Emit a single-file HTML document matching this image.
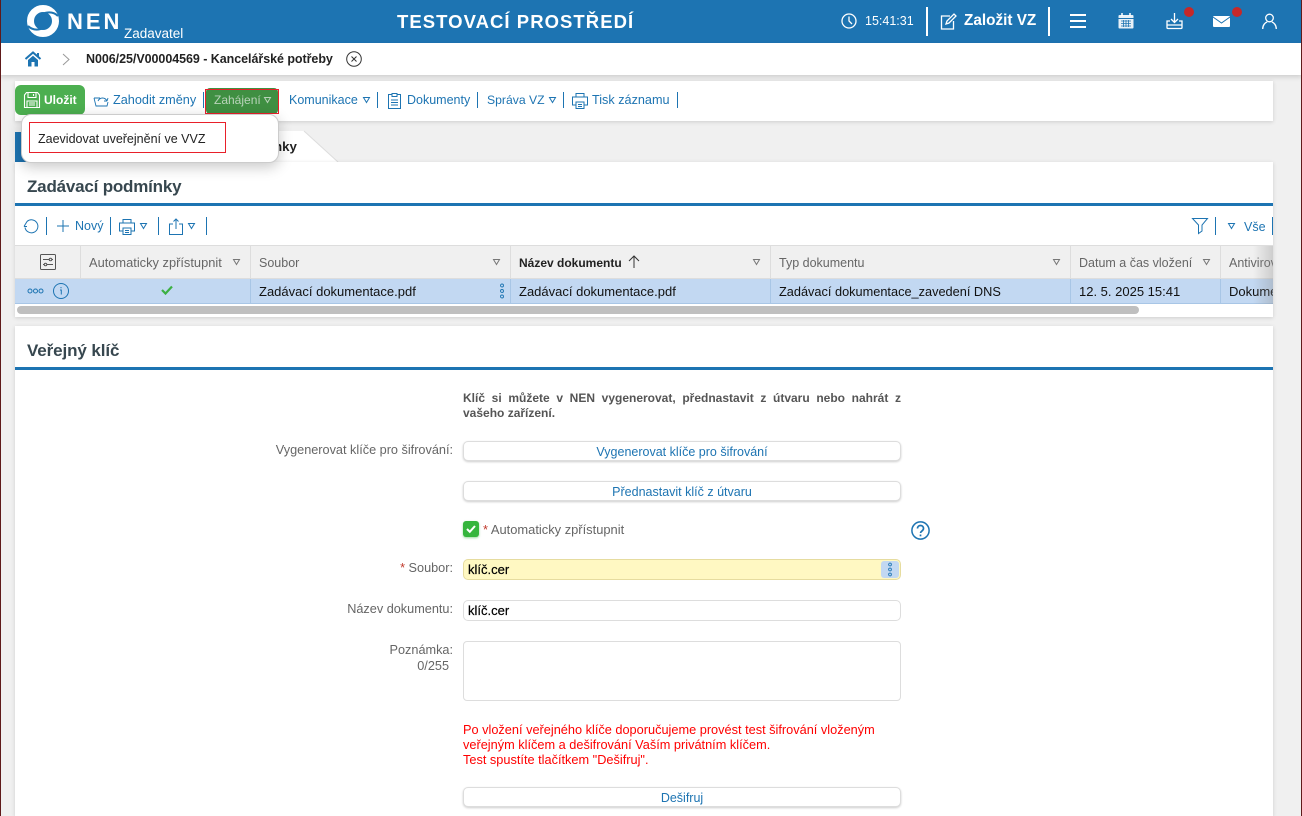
<!DOCTYPE html>
<html lang="cs"><head><meta charset="utf-8"><title>NEN</title>
<style>
*{box-sizing:border-box}
html,body{margin:0;padding:0;width:1302px;height:816px;overflow:hidden;background:#f0f0f0;font-family:"Liberation Sans",sans-serif}
.a{position:absolute}
.t{position:absolute;white-space:nowrap;font-size:12.5px;line-height:16px;color:#666}
.b{color:#1d74b2}
.s{position:absolute;width:1px;background:#1d74b2}
svg{position:absolute;overflow:visible;fill:none}
.btn{position:absolute;left:463px;width:438px;height:20px;background:#fff;border:1px solid #ddd;border-radius:5px;box-shadow:0 1px 2px rgba(0,0,0,.2);text-align:center;font-size:12.5px;line-height:21px;color:#1d74b2}
.inp{position:absolute;left:463px;width:438px;height:21px;background:#fff;border:1px solid #ddd;border-radius:5px;font-size:13px;line-height:19px;color:#000;padding-left:4px;-webkit-text-stroke:.2px #000}
.th{position:absolute;top:246px;height:33px;background:#f0f0f0;border-right:1px solid #ddd}
.td{position:absolute;top:279px;height:25px;border-right:1px solid #a8c6e6}
.r{text-align:right;font-size:12.7px}
</style></head><body>

<div class="a" style="left:0;top:0;width:1302px;height:43px;background:#1d74b2"></div>
<div class="a" style="left:0;top:43px;width:1302px;height:32px;background:#fff;box-shadow:0 2px 5px rgba(0,0,0,.15)"></div>

<!-- logo -->
<svg style="left:27px;top:5px" width="32" height="32" viewBox="0 0 32 32"><circle cx="16" cy="16" r="12.500" stroke="#fff" stroke-width="7"/><path d="M1 21C6 26 12 25 17 23M31 11C26 6 20 7 15 9" stroke="#1d74b2" stroke-width="2"/></svg>
<div class="t" style="left:67px;top:9px;font-size:22px;line-height:26px;font-weight:bold;color:#fff;letter-spacing:3px">NEN</div>
<div class="t" style="left:124px;top:26px;font-size:13.500px;color:#fff">Zadavatel</div>
<div class="t" style="left:397px;top:10px;font-size:18.500px;line-height:24px;font-weight:bold;color:#fff;letter-spacing:1.050px">TESTOVACÍ PROSTŘEDÍ</div>

<!-- clock -->
<svg style="left:841px;top:13px" width="16" height="16" viewBox="0 0 16 16" stroke="#fff" stroke-width="1.300"><circle cx="8" cy="8" r="7"/><path d="M8 3.500V8l3 3"/></svg>
<div class="t" style="left:865px;top:13px;color:#fff;font-size:12.500px">15:41:31</div>
<div class="a" style="left:926px;top:7px;width:2px;height:29px;background:#fff"></div>
<svg style="left:940px;top:13px" width="18" height="17" viewBox="0 0 18 17" stroke="#fff" stroke-width="1.300"><path d="M10 3H1.500v13h12V8"/><path d="M6 11l1-3 7-7 2 2-7 7z"/></svg>
<div class="t" style="left:964px;top:12px;color:#fff;font-size:15.300px;font-weight:bold;line-height:18px">Založit VZ</div>
<div class="a" style="left:1048px;top:7px;width:2px;height:29px;background:#fff"></div>
<div class="a" style="left:1070px;top:14px;width:16px;height:14px;border-top:2px solid #fff;border-bottom:2px solid #fff"></div>
<div class="a" style="left:1070px;top:20px;width:16px;height:2px;background:#fff"></div>
<!-- calendar -->
<svg style="left:1118px;top:13px" width="16" height="16" viewBox="0 0 16 16"><rect x=".5" y="2" width="15" height="13.500" rx="1" fill="#fff" opacity=".9"/><path d="M.5 5.500h15" stroke="#1d74b2"/><path d="M4 0v3M12 0v3" stroke="#fff" stroke-width="1.500"/><path d="M3 8h10M3 10.500h10M3 13h10M5.500 7v7M8 7v7M10.500 7v7" stroke="#1d74b2" stroke-width=".8"/></svg>
<!-- download -->
<svg style="left:1166px;top:13px" width="17" height="17" viewBox="0 0 17 17" stroke="#fff" stroke-width="1.300"><path d="M8.500 0v9M5 6l3.500 3.500L12 6"/><path d="M4 8H1v6.500a1 1 0 0 0 1 1h13a1 1 0 0 0 1-1V8h-3M1 12h15"/></svg>
<div class="a" style="left:1184px;top:7px;width:10px;height:10px;border-radius:50%;background:#c62828"></div>
<!-- mail -->
<svg style="left:1213px;top:16px" width="17" height="11" viewBox="0 0 17 11"><rect width="17" height="11" rx="1" fill="#fff"/><path d="M0 1l8.500 6L17 1" stroke="#1d74b2"/></svg>
<div class="a" style="left:1232px;top:7px;width:10px;height:10px;border-radius:50%;background:#c62828"></div>
<!-- user -->
<svg style="left:1262px;top:13px" width="15" height="16" viewBox="0 0 15 16" stroke="#fff" stroke-width="1.300"><circle cx="7.500" cy="5" r="3.800"/><path d="M.7 16c0-4 2.500-6.500 4.500-7M14.300 16c0-4-2.500-6.500-4.500-7"/></svg>

<!-- breadcrumb -->
<svg style="left:25px;top:51px" width="16" height="16" viewBox="0 0 16 16"><path d="M.5 8L8 1.500 15.500 8" stroke="#1d74b2" stroke-width="2"/><path d="M3 9L8 4.800 13 9v6.500H9.500V11h-3v4.500H3z" fill="#1d74b2"/><path d="M12 2h2v3.500h-2z" fill="#1d74b2"/></svg>
<svg style="left:62px;top:53px" width="8" height="13" viewBox="0 0 8 13" stroke="#999"><path d="M1 1l6 5.500L1 12"/></svg>
<div class="t" style="left:86px;top:51px;font-size:12.500px;font-weight:bold;color:#222;letter-spacing:-.05px">N006/25/V00004569 - Kancelářské potřeby</div>
<svg style="left:346px;top:51px" width="16" height="16" viewBox="0 0 16 16" stroke="#333"><circle cx="8" cy="8" r="7.300"/><path d="M5.500 5.500l5 5M10.500 5.500l-5 5"/></svg>

<!-- toolbar -->
<div class="a" style="left:15px;top:81px;width:1258px;height:40px;background:#fff;box-shadow:0 1px 4px rgba(0,0,0,.15)"></div>
<div class="a" style="left:15px;top:85px;width:70px;height:30px;background:#4caf50;border-radius:6px"></div>
<svg style="left:24px;top:92px" width="16" height="16" viewBox="0 0 16 16" stroke="#fff" stroke-width="1.100"><path d="M.5 3l2-2.500h11l2 2.500v12.500H.5z"/><path d="M4 .5v5h8v-5M9.500 2v2M3 15.500V9h10v6.500M5 11h6M5 13h6"/></svg>
<div class="t" style="left:44px;top:92px;color:#fff;font-weight:bold;font-size:12px">Uložit</div>
<svg style="left:93px;top:95px" width="16" height="12" viewBox="0 0 16 12" stroke="#1d74b2"><path d="M1 3h6M1 3l2 8h11l1-4M5 6c2-4 7-4 9 0M14 6l1-3M14 6l-3 0" stroke-width=".9"/></svg>
<div class="t b" style="left:113px;top:92px;font-size:12.700px">Zahodit změny</div>
<div class="s" style="left:203px;top:92px;height:16px"></div>
<div class="a" style="left:206px;top:88px;width:72px;height:26px;background:#3f8f42;border-radius:4px"></div>
<div class="a" style="left:205px;top:89px;width:74px;height:25px;border:1px solid #e8202a"></div>
<div class="t" style="left:214px;top:92px;color:#b9d3ba;font-size:12px">Zahájení</div>
<svg style="left:264px;top:97px" width="7" height="6" viewBox="0 0 7 6" stroke="#b9d3ba"><path d="M.5.500h6L3.500 5.500z"/></svg>
<div class="t b" style="left:289px;top:92px">Komunikace</div>
<svg style="left:363px;top:97px" width="7" height="6" viewBox="0 0 7 6" stroke="#1d74b2"><path d="M.5.500h6L3.500 5.500z"/></svg>
<div class="s" style="left:377px;top:92px;height:16px"></div>
<svg style="left:388px;top:92px" width="13" height="17" viewBox="0 0 13 17" stroke="#1d74b2"><path d="M4 2.500H.5v14h12v-14H9M4 1.500h5v3H4zM3 8h7M3 10.500h7M3 13h7"/></svg>
<div class="t b" style="left:407px;top:92px">Dokumenty</div>
<div class="s" style="left:477px;top:92px;height:16px"></div>
<div class="t b" style="left:487px;top:92px;font-size:12.200px">Správa VZ</div>
<svg style="left:549px;top:97px" width="7" height="6" viewBox="0 0 7 6" stroke="#1d74b2"><path d="M.5.500h6L3.500 5.500z"/></svg>
<div class="s" style="left:563px;top:92px;height:16px"></div>
<svg style="left:572px;top:93px" width="16" height="16" viewBox="0 0 16 16" stroke="#1d74b2"><path d="M4 4V.5h8V4M4 12H.5V4h15v8H12M4 9h8v6.500H4zM6 11.500h4M6 13.500h4"/></svg>
<div class="t b" style="left:592px;top:92px;font-size:12.650px">Tisk záznamu</div>
<div class="s" style="left:677px;top:92px;height:16px"></div>

<!-- tab -->
<div class="a" style="left:15px;top:132px;width:40px;height:30px;background:#1d74b2"></div>
<svg style="left:200px;top:131px" width="140" height="31" viewBox="0 0 140 31"><path d="M0 0H104L138 31H0z" fill="#fff"/><path d="M104 0L138 31" stroke="#ddd"/></svg>
<div class="t" style="left:274px;top:139px;font-size:13.300px;font-weight:bold;color:#222">nky</div>

<!-- panel 1 -->
<div class="a" style="left:15px;top:162px;width:1258px;height:155px;background:#fff;box-shadow:0 1px 4px rgba(0,0,0,.15)"></div>
<div class="a" style="left:15px;top:203px;width:1258px;height:3px;background:#1d74b2"></div>
<div class="t" style="left:27px;top:176px;font-size:17px;line-height:22px;font-weight:bold;color:#37474f;letter-spacing:-.2px">Zadávací podmínky</div>

<svg style="left:23px;top:219px" width="16" height="15" viewBox="0 0 16 15" stroke="#1d74b2"><path d="M4 2.500a6.500 6.500 0 1 1-2 6M4 2.500L1 7.500M1 7.500h3"/></svg>
<div class="s" style="left:46px;top:217px;height:18px"></div>
<svg style="left:57px;top:220px" width="12" height="12" viewBox="0 0 12 12" stroke="#1d74b2"><path d="M6 0v12M0 6h12"/></svg>
<div class="t b" style="left:75px;top:218px">Nový</div>
<div class="s" style="left:110px;top:217px;height:18px"></div>
<svg style="left:119px;top:219px" width="16" height="16" viewBox="0 0 16 16" stroke="#1d74b2"><path d="M4 4V.5h8V4M4 12H.5V4h15v8H12M4 9h8v6.500H4zM6 11.500h4M6 13.500h4"/></svg>
<svg style="left:140px;top:223px" width="7" height="6" viewBox="0 0 7 6" stroke="#1d74b2"><path d="M.5.500h6L3.500 5.500z"/></svg>
<div class="s" style="left:158px;top:217px;height:18px"></div>
<svg style="left:169px;top:218px" width="14" height="17" viewBox="0 0 14 17" stroke="#1d74b2"><path d="M4 6H.5v10.500h13V6H10M7 11V1M4.500 3.500L7 1l2.500 2.500"/></svg>
<svg style="left:188px;top:223px" width="7" height="6" viewBox="0 0 7 6" stroke="#1d74b2"><path d="M.5.500h6L3.500 5.500z"/></svg>
<div class="s" style="left:206px;top:217px;height:18px"></div>

<svg style="left:1192px;top:218px" width="16" height="16" viewBox="0 0 16 16" stroke="#1d74b2"><path d="M.5.500h15L10 7v6l-3.500 2.500V7z"/></svg>
<div class="s" style="left:1215px;top:217px;height:18px"></div>
<svg style="left:1228px;top:223px" width="7" height="6" viewBox="0 0 7 6" stroke="#1d74b2"><path d="M.5.500h6L3.500 5.500z"/></svg>
<div class="t b" style="left:1244px;top:219px">Vše</div>
<div class="s" style="left:1272px;top:217px;height:18px"></div>

<!-- table header -->
<div class="a" style="left:15px;top:245px;width:1258px;height:1px;background:#ddd"></div>
<div class="th" style="left:15px;width:66px"></div>
<div class="th" style="left:81px;width:170px"></div>
<div class="th" style="left:251px;width:260px"></div>
<div class="th" style="left:511px;width:260px"></div>
<div class="th" style="left:771px;width:300px"></div>
<div class="th" style="left:1071px;width:150px"></div>
<div class="th" style="left:1221px;width:52px;border-right:0"></div>
<div class="a" style="left:15px;top:278px;width:1258px;height:1px;background:#ddd"></div>
<svg style="left:40px;top:254px" width="16" height="16" viewBox="0 0 16 16" stroke="#555"><rect x=".5" y=".5" width="15" height="15" rx="1"/><path d="M3 5.500h6M12 5.500h1M3 10.500h1M7 10.500h6"/><circle cx="10.500" cy="5.500" r="1.300"/><circle cx="5.500" cy="10.500" r="1.300"/></svg>
<div class="t" style="left:89px;top:255px;font-size:12.850px">Automaticky zpřístupnit</div>
<div class="t" style="left:259px;top:255px">Soubor</div>
<div class="t" style="left:519px;top:255px;font-weight:bold;color:#222;font-size:12px">Název dokumentu</div>
<svg style="left:628px;top:255px" width="12" height="13" viewBox="0 0 12 13" stroke="#333"><path d="M6 13V1M1 6l5-5 5 5"/></svg>
<div class="t" style="left:779px;top:255px">Typ dokumentu</div>
<div class="t" style="left:1079px;top:255px">Datum a čas vložení</div>
<div class="a" style="left:1229px;top:255px;width:44px;overflow:hidden;height:16px;font-size:12.500px;line-height:16px;color:#666;white-space:nowrap">Antivirová</div>
<svg style="left:233px;top:259px" width="7" height="6" viewBox="0 0 7 6" stroke="#777"><path d="M.5.500h6L3.500 5.500z"/></svg>
<svg style="left:493px;top:259px" width="7" height="6" viewBox="0 0 7 6" stroke="#777"><path d="M.5.500h6L3.500 5.500z"/></svg>
<svg style="left:753px;top:259px" width="7" height="6" viewBox="0 0 7 6" stroke="#777"><path d="M.5.500h6L3.500 5.500z"/></svg>
<svg style="left:1053px;top:259px" width="7" height="6" viewBox="0 0 7 6" stroke="#777"><path d="M.5.500h6L3.500 5.500z"/></svg>
<svg style="left:1203px;top:259px" width="7" height="6" viewBox="0 0 7 6" stroke="#777"><path d="M.5.500h6L3.500 5.500z"/></svg>

<!-- row -->
<div class="a" style="left:15px;top:279px;width:1258px;height:25px;background:#c2d8f2;border-bottom:1px solid #a8c6e6"></div>
<div class="td" style="left:81px;width:170px"></div>
<div class="td" style="left:251px;width:260px"></div>
<div class="td" style="left:511px;width:260px"></div>
<div class="td" style="left:771px;width:300px"></div>
<div class="td" style="left:1071px;width:150px"></div>
<svg style="left:27px;top:288px" width="17" height="6" viewBox="0 0 17 6" stroke="#1d74b2"><circle cx="3" cy="3" r="2"/><circle cx="8.500" cy="3" r="2"/><circle cx="14" cy="3" r="2"/></svg>
<svg style="left:53px;top:283px" width="16" height="16" viewBox="0 0 16 16" stroke="#1d74b2"><circle cx="8" cy="8" r="7.500"/><path d="M7 7h1.300v4.500M8 4v1.300"/></svg>
<svg style="left:161px;top:285px" width="12" height="10" viewBox="0 0 12 10" stroke="#3cb043" stroke-width="2.200"><path d="M1 5l3.500 3.500L11 1.500"/></svg>
<div class="t" style="left:259px;top:284px;color:#111;font-size:13px">Zadávací dokumentace.pdf</div>
<svg style="left:500px;top:283px" width="4" height="16" viewBox="0 0 4 16" stroke="#1d74b2" stroke-width=".9"><circle cx="2" cy="2.500" r="1.500"/><circle cx="2" cy="8" r="1.500"/><circle cx="2" cy="13.500" r="1.500"/></svg>
<div class="t" style="left:519px;top:284px;color:#111;font-size:13px">Zadávací dokumentace.pdf</div>
<div class="t" style="left:779px;top:284px;color:#111;font-size:12.750px">Zadávací dokumentace_zavedení DNS</div>
<div class="t" style="left:1079px;top:284px;color:#111;font-size:13px">12. 5. 2025 15:41</div>
<div class="a" style="left:1229px;top:284px;width:44px;overflow:hidden;height:16px;font-size:13px;line-height:16px;color:#111;white-space:nowrap">Dokument</div>
<div class="a" style="left:1253px;top:246px;width:20px;height:58px;background:linear-gradient(90deg,rgba(160,160,160,0),rgba(140,140,140,.35))"></div>
<div class="a" style="left:17px;top:306px;width:1122px;height:8px;background:#bfbfbf;border-radius:4px"></div>

<!-- panel 2 -->
<div class="a" style="left:15px;top:326px;width:1258px;height:490px;background:#fff;box-shadow:0 1px 4px rgba(0,0,0,.15)"></div>
<div class="a" style="left:15px;top:367px;width:1258px;height:3px;background:#1d74b2"></div>
<div class="t" style="left:27px;top:340px;font-size:17px;line-height:22px;font-weight:bold;color:#37474f;letter-spacing:-.1px">Veřejný klíč</div>

<div class="a" style="left:463px;top:391px;width:438px;font-size:12px;line-height:15px;font-weight:bold;color:#555;text-align:justify">Klíč si můžete v NEN vygenerovat, přednastavit z útvaru nebo nahrát z vašeho zařízení.</div>

<div class="t r" style="right:849px;top:442px">Vygenerovat klíče pro šifrování:</div>
<div class="btn" style="top:441px">Vygenerovat klíče pro šifrování</div>
<div class="btn" style="top:481px">Přednastavit klíč z útvaru</div>

<div class="a" style="left:463px;top:521px;width:16px;height:16px;background:#35b53c;border-radius:3px;box-shadow:0 1px 2px rgba(53,181,60,.5)"></div>
<svg style="left:466px;top:525px" width="10" height="8" viewBox="0 0 10 8" stroke="#fff" stroke-width="2"><path d="M1 4l2.800 2.800L9 1"/></svg>
<div class="t" style="left:483px;top:522px;font-size:12.900px"><span style="color:#c0392b">*</span> Automaticky zpřístupnit</div>
<svg style="left:911px;top:521px" width="19" height="19" viewBox="0 0 19 19" stroke="#1d74b2" stroke-width="1.500"><circle cx="9.500" cy="9.500" r="8.600"/><path d="M6.500 7.500c0-4 6-4 6 0 0 2.500-3 2.500-3 4.500" stroke-width="1.700"/><path d="M9.500 13.500v1.800" stroke-width="1.700"/></svg>

<div class="t r" style="right:849px;top:560px"><span style="color:#c0392b">*</span> Soubor:</div>
<div class="inp" style="top:559px;background:#fff8c2;border-color:#e6dc9f">klíč.cer</div>
<div class="a" style="left:881px;top:561px;width:18px;height:17px;background:#c2d8f2;border-radius:3px"></div>
<svg style="left:888px;top:562px" width="4" height="15" viewBox="0 0 4 15" stroke="#1d74b2" stroke-width=".9"><circle cx="2" cy="2.500" r="1.400"/><circle cx="2" cy="7.500" r="1.400"/><circle cx="2" cy="12.500" r="1.400"/></svg>

<div class="t r" style="right:849px;top:601px">Název dokumentu:</div>
<div class="inp" style="top:600px">klíč.cer</div>

<div class="t r" style="right:849px;top:642px">Poznámka:</div>
<div class="t r" style="right:853px;top:658px">0/255</div>
<div class="a" style="left:463px;top:641px;width:438px;height:60px;background:#fff;border:1px solid #ddd;border-radius:4px"></div>

<div class="t" style="left:463px;top:722px;color:#f00;font-size:12.750px;line-height:15px;white-space:nowrap;width:440px">Po vložení veřejného klíče doporučujeme provést test šifrování vloženým<br>veřejným klíčem a dešifrování Vaším privátním klíčem.<br>Test spustíte tlačítkem "Dešifruj".</div>

<div class="btn" style="top:787px">Dešifruj</div>

<!-- dropdown -->
<div class="a" style="left:21px;top:114px;width:258px;height:49px;background:#fff;border:1px solid #ccc;border-radius:10px;box-shadow:0 4px 14px rgba(0,0,0,.22)"></div>
<div class="a" style="left:29px;top:122px;width:197px;height:31px;border:1px solid #e8202a"></div>
<div class="t" style="left:38px;top:131px;color:#222;font-size:12.500px">Zaevidovat uveřejnění ve VVZ</div>

<!-- edge stripes -->
<div class="a" style="left:0;top:0;width:1px;height:816px;background:#5f1a1a"></div>
<div class="a" style="left:1301px;top:0;width:1px;height:816px;background:#5f1a1a"></div>
</body></html>
